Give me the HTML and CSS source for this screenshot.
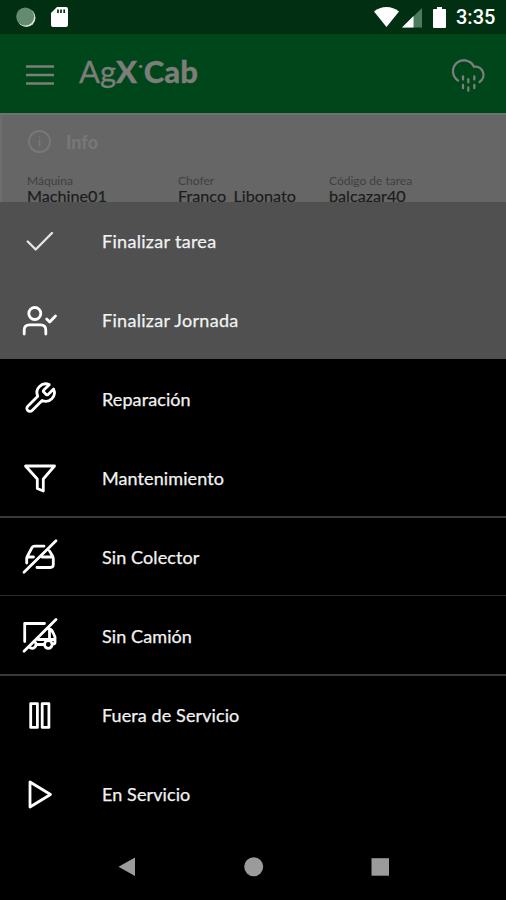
FILE: index.html
```html
<!DOCTYPE html>
<html lang="es">
<head>
  <meta charset="UTF-8" />
  <meta name="viewport" content="width=device-width, initial-scale=1.0"/>
  <title>AgX Cab</title>
  <link rel="stylesheet" href="styles.css">
</head>
<body>

  <div class="status-bar">
    <svg class="status-left" width="51" height="34" viewBox="0 0 51 34">
      <circle cx="26.3" cy="17.8" r="9.2" fill="#dbe6de"/>
      <circle cx="25.2" cy="16.6" r="9" fill="#648a70"/>
    </svg>
    <svg class="sd-card" width="17" height="20" viewBox="0 0 17 20">
      <path d="M6 0h9q2 0 2 2v16q0 2-2 2H2q-2 0-2-2V6z" fill="#fff"/>
      <path d="M7 2.5v3.5M10 2.5v3.5M13.2 2.5v3.5" stroke="#002f12" stroke-width="1.7"/>
    </svg>
    <svg class="status-right" width="76" height="34" viewBox="0 0 76 34">
      <path d="M0 11.5C7 5.5 18 5.5 25 11.5L12.5 27z" fill="#fff"/>
      <path d="M28 27.5L48 8v19.5z" fill="#4d7c5c"/>
      <path d="M28 27.5L39.5 16v11.5z" fill="#fff"/>
      <path d="M60 9h3V7h5v2h3q1 0 1 1v17q0 1-1 1H60q-1 0-1-1V10q0-1 1-1z" fill="#fff"/>
    </svg>
    <span class="clock">3:35</span>
  </div>

  <header class="app-bar">
    <svg width="28" height="22" viewBox="0 0 28 22">
      <path d="M1 2.5h26M1 11h26M1 19.5h26" stroke="#7d7d79" stroke-width="2.6" stroke-linecap="round"/>
    </svg>
    <h1 class="logo">Ag<b>X</b><sup>•</sup><b>Cab</b></h1>
    <svg class="weather" width="36" height="36" viewBox="0 0 36 36">
      <g fill="none" stroke="#7d7d79" stroke-width="2.3" stroke-linecap="round">
        <path d="M8 23.5A11 11 0 1 1 24 9.7A8.3 8.3 0 0 1 29.5 25"/>
        <path d="M13 19.3v3.2M18.3 22.2v3.2M24.3 19.3v3.2M13 28v3.2M18.3 30.5v3.2M24.3 28v3.2"/>
      </g>
    </svg>
  </header>

  <section class="info">
    <div class="info-title">
      <svg width="24" height="24" viewBox="0 0 24 24">
        <circle cx="12.5" cy="11.5" r="10.5" fill="none" stroke="#777" stroke-width="2"/>
        <path d="M12.5 6.5v1.8M12.5 10v6.5" stroke="#777" stroke-width="1.8"/>
      </svg>
      <h2>Info</h2>
    </div>
    <div class="info-grid">
      <div><small>Máquina</small><p>Machine01</p></div>
      <div><small>Chofer</small><p>Franco_Libonato</p></div>
      <div><small>Código de tarea</small><p>balcazar40</p></div>
    </div>
  </section>

  <ul class="menu">
    <li class="light">
      <svg class="icon thin" viewBox="0 0 40 40"><path d="M7.7 20.5l8 8L32 12"/></svg>
      <span>Finalizar tarea</span>
    </li>
    <li class="light">
      <svg class="icon" viewBox="0 0 40 40">
        <circle cx="14.8" cy="13.5" r="6"/>
        <path d="M4.2 34v-4q0-5.2 5.200-5.200h11.200q5.200 0 5.200 5.200v4M26.700 19l3 3L35.500 16"/>
      </svg>
      <span>Finalizar Jornada</span>
    </li>
    <li>
      <svg class="icon" viewBox="0 0 40 40">
        <path d="M23.8 11.1a1.45 1.45 0 0 0 0 2l2.3 2.3a1.45 1.45 0 0 0 2 0l5.500-5.400a8.700 8.700 0 0 1-11.500 11.500l-10 10a3.070 3.070 0 0 1-4.350-4.350l10-10a8.700 8.700 0 0 1 11.500-11.500z"/>
      </svg>
      <span>Reparación</span>
    </li>
    <li>
      <svg class="icon" viewBox="0 0 40 40"><path d="M5.5 8h29L23.300 21v12l-6-2.500V21z"/></svg>
      <span>Mantenimiento</span>
    </li>
    <li class="line-top">
      <svg class="icon" viewBox="0 0 40 40">
        <path d="M4 35.300L36 3.700M24 9.200H15q-2.500 0-3.500 2.300L7.500 19l-.8 2v5M7 20h6.500M29.500 14l3.300 5.500.5 2v6q0 3-3 3H17M22 20h10.500"/>
      </svg>
      <span>Sin Colector</span>
    </li>
    <li class="line-mid">
      <svg class="icon" viewBox="0 0 40 40">
        <path d="M4 35.300L36 3.500M24.500 7.500H4.700v18M28.500 13q3 0 4.500 3.500l2 4.500v5.500q0 1.500-2.500 1.500M29.500 13.500v9M18 23.500h16.500M16.500 28.500h7.500"/>
        <circle cx="28.300" cy="28.500" r="3.800"/>
        <path d="M15.500 26.500a3.800 3.800 0 0 1-5.500 5"/>
      </svg>
      <span>Sin Camión</span>
    </li>
    <li class="line-top">
      <svg class="icon" viewBox="0 0 40 40"><path d="M10.700 8.600h6.700v23.800h-6.700zM22.200 8.600h6.700v23.800h-6.700z"/></svg>
      <span>Fuera de Servicio</span>
    </li>
    <li>
      <svg class="icon" viewBox="0 0 40 40"><path d="M10 8v25L30.500 20.500z"/></svg>
      <span>En Servicio</span>
    </li>
  </ul>

  <nav class="nav-bar">
    <svg width="20" height="20" viewBox="0 0 20 20"><path d="M18 .5v18.500L1.500 9.800z"/></svg>
    <svg width="20" height="20" viewBox="0 0 20 20"><circle cx="9.700" cy="9.700" r="9.500"/></svg>
    <svg width="20" height="20" viewBox="0 0 20 20"><path d="M1.500 1.200h17.500v17.500H1.500z"/></svg>
  </nav>

</body>
</html>
```
FILE: styles.css
```css
* {
  box-sizing: border-box;
  margin: 0;
  padding: 0;
}

body {
  width: 506px;
  height: 900px;
  overflow: hidden;
  background: #000;
  font-family: Lato, sans-serif;
}

.status-bar {
  display: flex;
  align-items: center;
  height: 34px;
  padding-right: 10px;
  background: #002f12;
}

.status-left,
.status-right {
  flex: none;
}

.status-right {
  margin-left: auto;
}

.clock {
  width: 40px;
  margin-left: 6px;
  color: #fff;
  font-family: Roboto, sans-serif;
  font-size: 20px;
  font-weight: 500;
  line-height: 36px;
}

.app-bar {
  display: flex;
  align-items: center;
  height: 79px;
  padding: 2px 20px 0 26px;
  background: #00461b;
  color: #7d7d79;
}

.logo {
  margin: -8px 0 0 25px;
  font-size: 31px;
  font-weight: 400;
  line-height: 40px;
  -webkit-text-stroke: 0.3px #7d7d79;
}

.logo b {
  font-weight: 900;
}

.logo sup {
  margin: 0 1px;
  font-size: 8px;
  vertical-align: 14px;
  line-height: 0;
}

.weather {
  margin-left: auto;
}

.info {
  height: 89px;
  overflow: hidden;
  padding: 15px 0 0 25px;
  background: #666;
  border-top: 2px solid #6a756a;
  border-left: 2px solid #6d6d6d;
}

.info-title {
  display: flex;
  align-items: center;
  gap: 15px;
  height: 24px;
}

.info-title h2 {
  color: #777;
  font-size: 18px;
  font-weight: 900;
}

.info-grid {
  display: grid;
  grid-template-columns: 151px 151px 1fr;
  margin-top: 19px;
}

.info-grid small {
  display: block;
  color: #404040;
  font-size: 12px;
  line-height: 15px;
}

.info-grid p {
  color: #1c1c1c;
  font-size: 16.2px;
  line-height: 16px;
  -webkit-text-stroke: 0.2px #1c1c1c;
}

.menu {
  list-style: none;
  height: 631px;
}

.menu li {
  display: flex;
  align-items: center;
  height: 79px;
  padding-left: 20px;
  color: #f2f2f2;
  font-size: 18px;
  letter-spacing: 0.1px;
  -webkit-text-stroke: 0.25px #f2f2f2;
}

.menu .light {
  height: 78.5px;
  background: #505050;
  letter-spacing: 0.3px;
}

.menu .line-top {
  height: 80px;
  margin-top: -1px;
  border-top: 2px solid #383838;
}

.menu .line-mid {
  height: 80px;
  margin-top: -1px;
  border-top: 1px solid #2c2c2c;
}

.icon {
  width: 40px;
  height: 40px;
  margin-right: 42px;
  fill: none;
  stroke: #fff;
  stroke-width: 2.8;
  stroke-linecap: round;
  stroke-linejoin: round;
}

.thin {
  stroke: #e4e4e4;
  stroke-width: 2.4;
}

.nav-bar {
  display: flex;
  justify-content: space-between;
  align-items: center;
  height: 67px;
  padding: 0 116px 0 117px;
  fill: #9b9b9b;
}
```
